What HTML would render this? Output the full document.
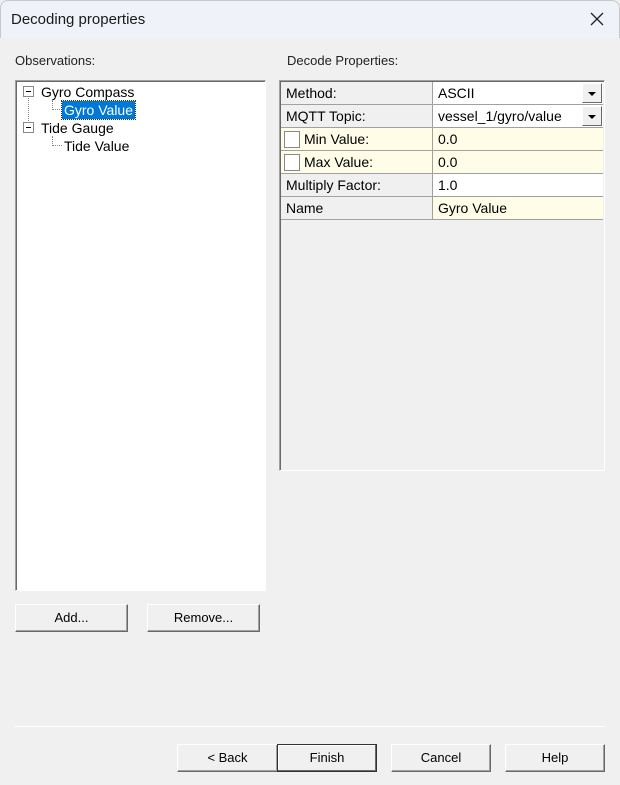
<!DOCTYPE html>
<html><head><style>
*{box-sizing:border-box;margin:0;padding:0}
body{width:620px;height:785px;background:#f0f0f0;font-family:"Liberation Sans",Arial,sans-serif;font-size:14px;color:#000;position:relative;overflow:hidden}
.title{position:absolute;left:0;top:0;width:620px;height:38px;background:#eff3f9;border:1px solid #c8c8c8;border-bottom:none;border-radius:8px 8px 0 0}
.title span{position:absolute;left:10px;top:10px;font-size:15px;color:#1a1a1a}
.x{position:absolute;left:588px;top:10px}
.a{position:absolute}
.lbl{font-size:13px;color:#222}
.tree{left:15px;top:80px;width:251px;height:511px;background:#fff;border:1px solid;border-color:#a0a0a0 #fff #fff #a0a0a0;box-shadow:inset 1px 1px 0 #696969}
.grid{left:279px;top:80px;width:326px;height:391px;border:1px solid;border-color:#a0a0a0 #fff #fff #a0a0a0;box-shadow:inset 1px 1px 0 #696969;background:#f0f0f0}
.row{position:absolute;left:1px;width:322px;height:23px;border-bottom:1px solid #a0a0a0}
.row .k{position:absolute;left:0;top:0;width:152px;height:22px;border-right:1px solid #a0a0a0;padding:3px 0 0 5px}
.row .v{position:absolute;left:152px;top:0;width:170px;height:22px;padding:3px 0 0 5px}
.cb{position:absolute;left:3px;top:3px;width:16px;height:17px;background:#fff;border:1px solid #888}
.dd{position:absolute;right:1px;top:1px;width:20px;height:20px;background:#f0f0f0;border:1px solid;border-color:#fff #696969 #696969 #fff}
.dd:after{content:"";position:absolute;left:5px;top:8px;border-left:4px solid transparent;border-right:4px solid transparent;border-top:4px solid #000}
.btn{position:absolute;height:28px;background:#f0f0f0;border:1px solid;border-color:#fff #696969 #696969 #fff;box-shadow:inset -1px -1px 0 #a0a0a0;text-align:center;font-size:13px;line-height:25px}
.exp{position:absolute;width:11px;height:11px;border:1px solid #888;background:#fff}
.exp:after{content:"";position:absolute;left:2px;top:4px;width:5px;height:1px;background:#000}
.dot{position:absolute;border-color:#888;border-style:dotted;border-width:0}
</style></head><body>
<div class="title"><span>Decoding properties</span>
<svg class="x" width="16" height="16" viewBox="0 0 16 16"><path d="M2 2L14 14M14 2L2 14" stroke="#222" stroke-width="1.3"/></svg></div>
<div class="a lbl" style="left:15px;top:53px">Observations:</div>
<div class="a lbl" style="left:287px;top:53px">Decode Properties:</div>
<div class="a tree">
 <div class="dot" style="left:12px;top:14px;height:36px;border-left-width:1px"></div>
 <div class="dot" style="left:36px;top:19px;height:10px;border-left-width:1px"></div>
 <div class="dot" style="left:36px;top:28px;width:8px;border-top-width:1px"></div>
 <div class="dot" style="left:36px;top:55px;height:10px;border-left-width:1px"></div>
 <div class="dot" style="left:36px;top:64px;width:10px;border-top-width:1px"></div>
 <div class="exp" style="left:7px;top:5px"></div>
 <div class="exp" style="left:7px;top:41px"></div>
 <div class="a" style="left:25px;top:3px">Gyro Compass</div>
 <div class="a" style="left:46px;top:20px;background:#0078d7;color:#fff;padding:1px 2px;outline:1px dotted #333">Gyro Value</div>
 <div class="a" style="left:25px;top:39px">Tide Gauge</div>
 <div class="a" style="left:48px;top:57px">Tide Value</div>
</div>
<div class="a grid">
 <div class="row" style="top:1px"><div class="k">Method:</div><div class="v" style="background:#fff">ASCII<div class="dd"></div></div></div>
 <div class="row" style="top:24px"><div class="k">MQTT Topic:</div><div class="v" style="background:#fff">vessel_1/gyro/value<div class="dd"></div></div></div>
 <div class="row" style="top:47px;background:#fffde8"><div class="k" style="padding-left:23px"><div class="cb"></div>Min Value:</div><div class="v">0.0</div></div>
 <div class="row" style="top:70px;background:#fffde8"><div class="k" style="padding-left:23px"><div class="cb"></div>Max Value:</div><div class="v">0.0</div></div>
 <div class="row" style="top:93px"><div class="k">Multiply Factor:</div><div class="v" style="background:#fff">1.0</div></div>
 <div class="row" style="top:116px"><div class="k">Name</div><div class="v" style="background:#fffde8">Gyro Value</div></div>
</div>
<div class="btn" style="left:15px;top:604px;width:113px">Add...</div>
<div class="btn" style="left:147px;top:604px;width:113px">Remove...</div>
<div class="a" style="left:14px;top:726px;width:591px;height:1px;background:#a0a0a0;border-bottom:1px solid #fff"></div>
<div class="btn" style="left:177px;top:744px;width:101px">&lt; Back</div>
<div class="btn" style="left:277px;top:744px;width:100px;border:1px solid #333;box-shadow:inset -1px -1px 0 #696969,inset 1px 1px 0 #fff">Finish</div>
<div class="btn" style="left:391px;top:744px;width:100px">Cancel</div>
<div class="btn" style="left:505px;top:744px;width:100px">Help</div>
</body></html>
